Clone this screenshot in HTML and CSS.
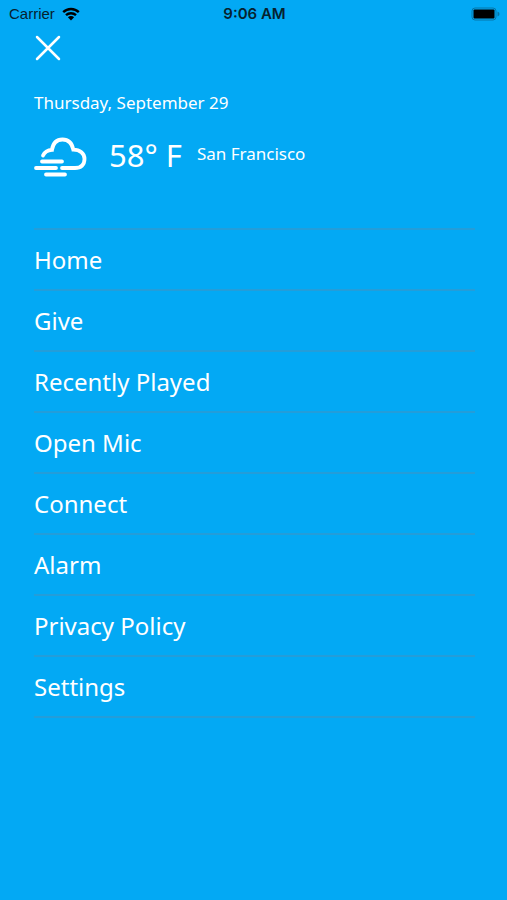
FILE: index.html
```html
<!DOCTYPE html>
<html lang="en">
<head>
<meta charset="utf-8">
<meta name="viewport" content="width=device-width, initial-scale=1">
<title>Menu</title>
<link rel="stylesheet" href="styles.css">
</head>
<body>
<header class="statusbar">
  <div class="carrier">
    <span>Carrier</span>
    <svg class="wifi" viewBox="0 0 18 14" aria-hidden="true">
      <path d="M1.2 5.2a11.2 11.2 0 0 1 15.6 0M4 8.2a7.2 7.2 0 0 1 10 0"/>
      <path class="solid" d="M5.9 10.3a4.4 4.4 0 0 1 6.2 0L9 13.6z"/>
    </svg>
  </div>
  <time class="clock">9:06 AM</time>
  <svg class="battery" viewBox="0 0 29 14" aria-hidden="true">
    <rect class="shell" x="1" y="1" width="24" height="12" rx="3"/>
    <rect x="2.500" y="2.500" width="21" height="9" rx="1"/>
    <path class="tip" d="M26.5 4.5v5q2-.8 2-2.5t-2-2.5z"/>
  </svg>
</header>

<main class="menu">
  <button class="close" type="button" aria-label="Close menu">
    <svg viewBox="0 0 26 26" aria-hidden="true"><path d="M2 2l22 22M24 2L2 24"/></svg>
  </button>

  <p class="date">Thursday, September 29</p>

  <div class="weather">
    <svg class="cloud" viewBox="0 0 54 40" aria-hidden="true">
      <path d="M9 18.500C10.500 15 13.500 13 18 12.800C19 6 23 2.500 28.500 2.500C34 2.500 38 6 39.300 12.700C46 12.700 50.500 16.500 50.500 22C50.500 28 46.800 31 41 31H28"/>
      <path d="M8 24.500h20M2 31h20M12 37.500h19"/>
    </svg>
    <span class="temp">58° F</span>
    <span class="city">San Francisco</span>
  </div>

  <nav>
    <ul class="links">
      <li><a href="#home">Home</a></li>
      <li><a href="#give">Give</a></li>
      <li><a href="#recent">Recently Played</a></li>
      <li><a href="#openmic">Open Mic</a></li>
      <li><a href="#connect">Connect</a></li>
      <li><a href="#alarm">Alarm</a></li>
      <li><a href="#privacy">Privacy Policy</a></li>
      <li><a href="#settings">Settings</a></li>
    </ul>
  </nav>
</main>
</body>
</html>
```
FILE: styles.css
```css
:root {
  --sky: #03a9f4;
  --line: #249dd9;
}

* {
  box-sizing: border-box;
}

body {
  margin: 0;
  min-height: 100vh;
  background-color: var(--sky);
  color: white;
  font-family: "Noto Sans", sans-serif;
}

/* status bar */
.statusbar {
  display: grid;
  grid-template-columns: 1fr auto 1fr;
  align-items: center;
  height: 27px;
  padding: 0 7px 0 9px;
  color: #06222f;
  font-family: "Liberation Sans", sans-serif;
  font-size: 15px;
}

.carrier {
  display: flex;
  align-items: center;
  gap: 7px;
}

.wifi {
  width: 18px;
  height: 14px;
  fill: none;
  stroke: black;
  stroke-width: 2.4;
}

.wifi .solid {
  fill: black;
  stroke: none;
}

.clock {
  font-family: Inter, sans-serif;
  font-weight: 600;
}

.battery {
  width: 29px;
  height: 14px;
  justify-self: end;
}

.battery .shell {
  fill: none;
  stroke: #0676a9;
}

.battery .tip {
  fill: #0676a9;
}

/* menu */
.menu {
  padding: 7px 32px 0 34px;
}

.close {
  display: block;
  width: 28px;
  height: 28px;
  padding: 1px;
  border: none;
  background: none;
  cursor: pointer;
}

.close svg {
  display: block;
  width: 26px;
  height: 26px;
  stroke: white;
  stroke-width: 2.5;
  stroke-linecap: round;
}

.date {
  margin: 29px 0 0;
  font-size: 17px;
  line-height: 24px;
}

.weather {
  display: flex;
  align-items: flex-start;
  height: 40px;
  margin-top: 22px;
}

.cloud {
  width: 54px;
  height: 40px;
  margin-right: 21px;
  fill: none;
  stroke: white;
  stroke-width: 3.8;
  stroke-linecap: round;
}

.temp {
  margin-right: 15px;
  font-size: 31px;
  line-height: 36px;
}

.city {
  font-size: 17px;
  line-height: 34px;
}

.links {
  margin: 51px 0 0;
  padding: 0;
  list-style: none;
  border-top: 2px solid var(--line);
}

.links li {
  border-bottom: 2px solid var(--line);
}

.links a {
  display: block;
  color: white;
  font-size: 24px;
  line-height: 59px;
  text-decoration: none;
}
```
